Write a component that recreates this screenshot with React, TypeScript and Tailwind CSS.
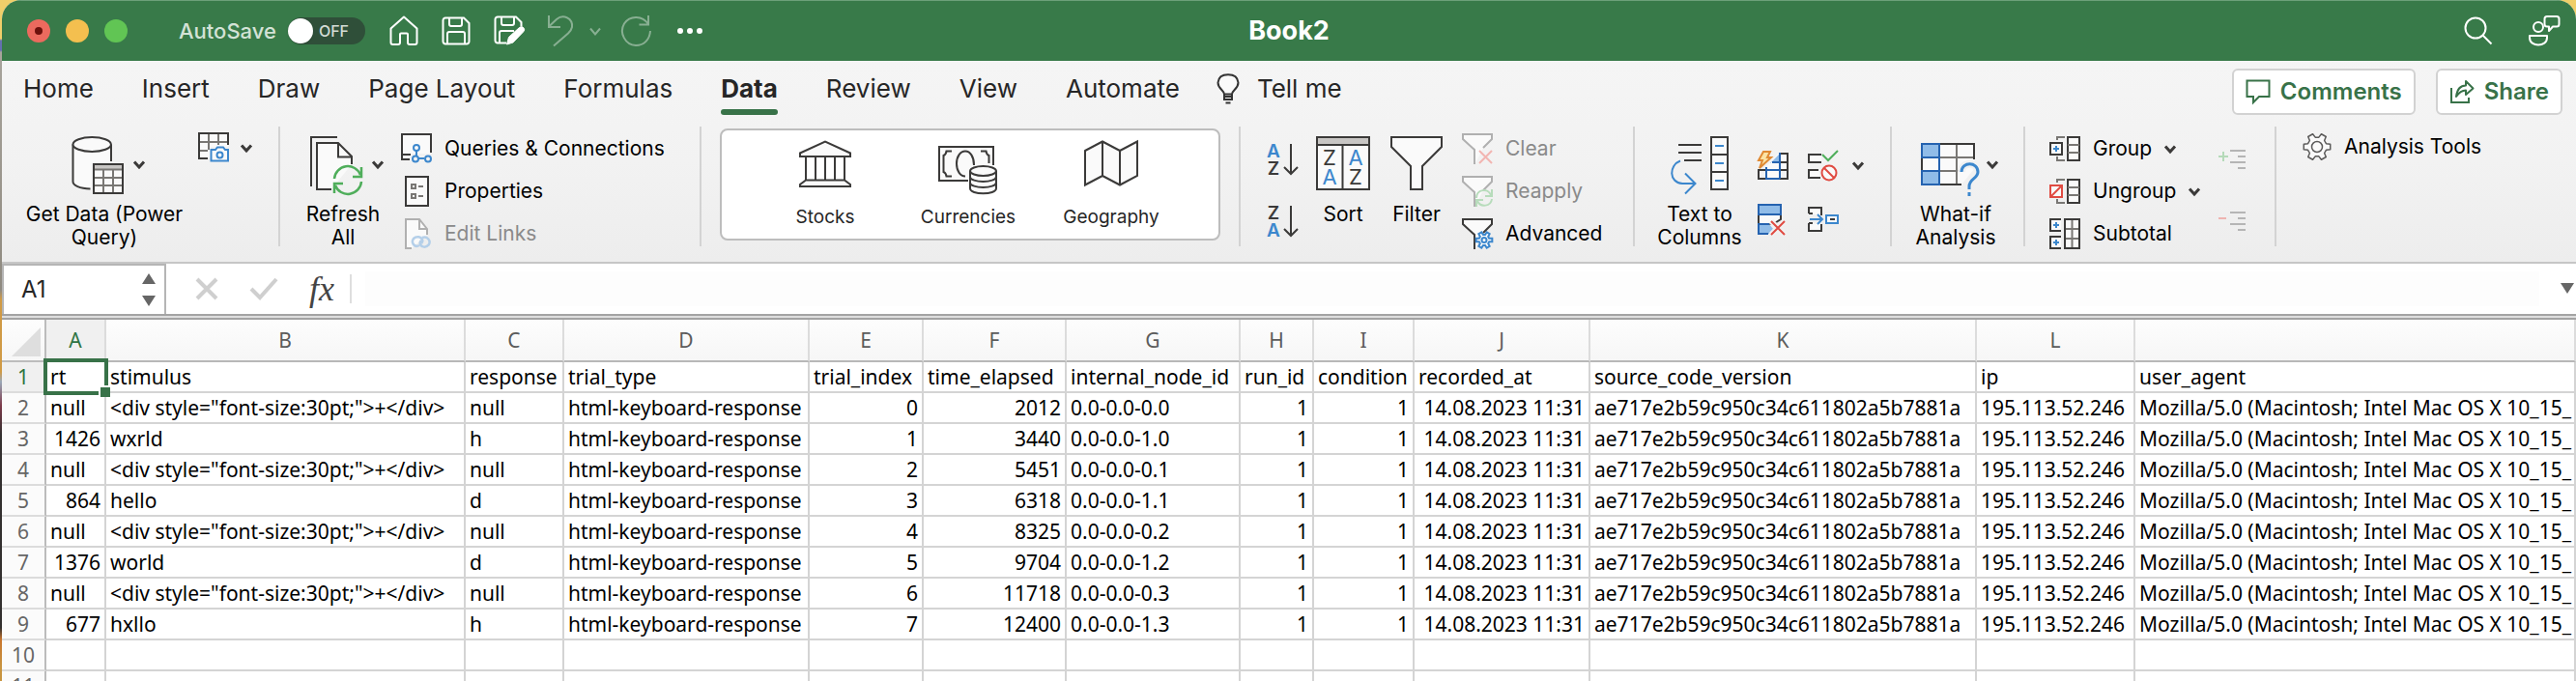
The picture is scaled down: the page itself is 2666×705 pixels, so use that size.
import React from 'react';

const INK = '#3b3a39';
const BLUE = '#3c87cd';
const DEEP = '#2563b0';
const SKY = '#90bce8';
const RED = '#e04b42';
const GREEN = '#4fae5b';
const PAPER = '#fafafa';

type IconProps = { w: number; h: number; children: React.ReactNode; stroke?: string; sw?: number; className?: string };

function Svg({ w, h, children, stroke = INK, sw = 2, className = '' }: IconProps) {
  return (
    <svg
      aria-hidden="true"
      width={w}
      height={h}
      viewBox={`0 0 ${w} ${h}`}
      fill="none"
      stroke={stroke}
      strokeWidth={sw}
      className={`shrink-0 overflow-visible ${className}`}
    >
      {children}
    </svg>
  );
}

function gearPath(cx: number, cy: number, outer: number, inner: number) {
  const pts: string[] = [];
  for (let i = 0; i < 6; i++) {
    const base = (i * Math.PI) / 3;
    const steps: [number, number][] = [
      [-0.34, inner],
      [-0.2, outer],
      [0.2, outer],
      [0.34, inner],
    ];
    for (const [da, r] of steps) {
      pts.push(`${(cx + Math.cos(base + da) * r).toFixed(2)} ${(cy + Math.sin(base + da) * r).toFixed(2)}`);
    }
  }
  return `M${pts.join('L')}Z`;
}

const Chevron = () => (
  <Svg w={12} h={9} sw={3}>
    <path d="M1 1.5 6 7l5-5.5" />
  </Svg>
);

/* ---------- title bar icons ---------- */

const HomeIcon = () => (
  <Svg w={30} h={32} stroke="#fff">
    <path d="M1.5 13.5 15 1.5l13.500 12V28a2 2 0 0 1-2 2H21a2 2 0 0 1-2-2v-8.500a1 1 0 0 0-1-1h-6a1 1 0 0 0-1 1V28a2 2 0 0 1-2 2H3.500a2 2 0 0 1-2-2Z" strokeLinejoin="round" />
  </Svg>
);
const SaveIcon = () => (
  <Svg w={30} h={30} stroke="#fff">
    <path d="M4 1.500h19l5.500 5.500V26a2.500 2.500 0 0 1-2.500 2.500H4A2.500 2.500 0 0 1 1.500 26V4A2.500 2.500 0 0 1 4 1.500Z" />
    <path d="M8 1.500V8a2 2 0 0 0 2 2h9a2 2 0 0 0 2-2V1.500M6 28.500V18a2 2 0 0 1 2-2h14a2 2 0 0 1 2 2v10.500" />
  </Svg>
);
const SaveEditIcon = () => (
  <Svg w={34} h={32} stroke="#fff">
    <path d="M13 28.500H4A2.500 2.500 0 0 1 1.500 26V4A2.500 2.500 0 0 1 4 1.500h19l5.500 5.500v4" />
    <path d="M8 1.500V8a2 2 0 0 0 2 2h9a2 2 0 0 0 2-2V1.500M6 28.500V18a2 2 0 0 1 2-2h13" />
    <path d="m13.500 30 2-7.500L26.500 12.500a3 3 0 0 1 4.300.2 3 3 0 0 1-.2 4.200L20 28Z" fill="#fff" strokeWidth="1" />
  </Svg>
);
const UndoIcon = () => (
  <Svg w={30} h={34} stroke="#fff">
    <path d="M2 1v12h12M2 12.500 10 5C17-1 27 4 26 13c-.5 3-2 4.500-4 6.500L7 32.500" />
  </Svg>
);
const RedoIcon = () => (
  <Svg w={32} h={34} stroke="#fff">
    <path d="M29 1v9.500H19.500M29 10C23 1 10 .5 4 9.500-1.500 19 5 31.500 16 32c8.500 0 14.500-6 15-15" />
  </Svg>
);

/* ---------- ribbon icons ---------- */

const DatabaseIcon = () => (
  <Svg w={56} h={60}>
    <path d="M1.500 8.500V47c0 4 8 7.500 19 7.500V28H41V8.500Z" fill={PAPER} stroke="none" />
    <path d="M1.500 8.500V47c0 4 7 7 18 7.500M41 8.500V26" />
    <ellipse cx="21.200" cy="8.500" rx="19.700" ry="7.500" fill={PAPER} />
    <rect x="23" y="29" width="30" height="30" fill={PAPER} />
    <path d="M23 29h30v5.500H23Z" fill="#c8c6c4" stroke="none" />
    <path d="M33 35v24M43 35v24M23 43h30M23 51h30" stroke="#797774" />
    <path d="M23 34.500h30" stroke="#797774" />
    <rect x="23" y="29" width="30" height="30" />
  </Svg>
);
const TableCameraIcon = () => (
  <Svg w={32} h={32}>
    <path d="M1 1h30v14H13v12H1Z" fill={PAPER} stroke="none" />
    <path d="M11 1v17M21 1v12M1 10h30M1 19h9" stroke="#797774" />
    <path d="M10 27H1V1h30v12" />
    <path d="M14 18h4l2-2.500h6L28 18h3v11.500H13.500V18Z" stroke={BLUE} fill={PAPER} />
    <circle cx="22.500" cy="23.500" r="3" stroke={BLUE} />
  </Svg>
);
const RefreshIcon = () => (
  <Svg w={56} h={61}>
    <path d="M1 52V1h27" />
    <path d="M22 55H7V7h22l14 14v8" fill={PAPER} />
    <path d="M29 7v14.500h14" />
    <g stroke={GREEN} strokeWidth="2.500">
      <path d="M25 44a14 14 0 0 1 27-4M53 32v10H44" />
      <path d="M53 47a14 14 0 0 1-27 4M25 59V49h9" />
    </g>
  </Svg>
);
const QueriesIcon = () => (
  <Svg w={32} h={32}>
    <path d="M1 1h30v20H1Z" fill={PAPER} stroke="none" />
    <path d="M10 22H1V1h30v19M1 22v5h8" />
    <g stroke={BLUE}>
      <path d="M16 18v5M18 26h6" />
      <circle cx="16" cy="15" r="3" />
      <circle cx="15" cy="26.500" r="3" />
      <circle cx="28" cy="26.500" r="3" />
    </g>
  </Svg>
);
const PropertiesIcon = () => (
  <Svg w={32} h={32}>
    <rect x="5" y="1" width="23" height="30" fill={PAPER} />
    <path d="M11 9h4v4h-4ZM11 19h4v4h-4ZM18 11h5M18 21h5" stroke="#797774" />
  </Svg>
);
const EditLinksIcon = () => (
  <Svg w={32} h={32} stroke="#b0b0b0">
    <path d="M11 31H5V1h14l8 10v6" fill={PAPER} />
    <path d="M19 1v10h8" />
    <g stroke="#b4cfe9" strokeWidth="2.500">
      <path d="M19 28c-5 3-9-3-6-7 3-3 8-2 9 1 1 2 0 3-1 4" />
      <path d="M22 20c5-2 9 3 7 7-3 4-8 3-9 0-1-2 0-3 1-4" />
    </g>
  </Svg>
);
const StocksIcon = () => (
  <Svg w={54} h={50}>
    <path d="M1 13.500 27 1.500l26 12V17H1ZM7 17v24M17 17v24M27 17v24M37 17v24M47 17v24" fill={PAPER} />
    <path d="M7 41.500h40l6 4.500v2H1v-2Z" fill={PAPER} />
  </Svg>
);
const CurrenciesIcon = () => (
  <Svg w={62} h={52}>
    <path d="M31 36H1V1h56v19" fill={PAPER} />
    <path d="M14 5.500H8.500Q8 9 5.500 10v17q2.500 1 3 4.500H14M44 5.500h5.500Q50 9 52.500 10v8" />
    <path d="M37 20c0-9-4-14.500-9-14.500S19 11 19 18.500 23 31.500 28 31.500" />
    <path d="M33 26v18c0 7 27 7 27 0V26" fill={PAPER} />
    <ellipse cx="46.500" cy="26" rx="13.500" ry="5" fill={PAPER} />
    <path d="M33 32c0 6.500 27 6.500 27 0M33 38c0 6.500 27 6.500 27 0" />
  </Svg>
);
const GeographyIcon = () => (
  <Svg w={56} h={50}>
    <path d="M1 11 19 1.500 37 11 55 1.500V37L37 46.500 19 37 1 46.500ZM19 1.500V37M37 11v35.500" fill={PAPER} />
  </Svg>
);

function SortArrowIcon({ first, second }: { first: 'A' | 'Z'; second: 'A' | 'Z' }) {
  return (
    <Svg w={34} h={34}>
      <g fontFamily="Inter, sans-serif" fontSize="19" fontWeight="600" textAnchor="middle" stroke="none">
        <text x="8" y="14" fill={first === 'A' ? BLUE : INK}>{first}</text>
        <text x="8" y="32" fill={second === 'A' ? BLUE : INK}>{second}</text>
      </g>
      <path d="M26 0v30M19 24l7 7 7-7" />
    </Svg>
  );
}
const SortIcon = () => (
  <Svg w={56} h={58}>
    <rect x="1" y="1" width="54" height="54" fill={PAPER} />
    <path d="M2 2h52v7H2Z" fill="#c8c6c4" stroke="none" />
    <path d="M1 9h54M27.500 9v46" />
    <g fontFamily="Inter, sans-serif" fontSize="22" textAnchor="middle" stroke="none">
      <text x="14" y="30" fill={INK}>Z</text>
      <text x="41" y="30" fill={BLUE}>A</text>
      <text x="14" y="50" fill={BLUE}>A</text>
      <text x="41" y="50" fill={INK}>Z</text>
    </g>
  </Svg>
);
const FilterIcon = () => (
  <Svg w={54} h={58}>
    <path d="M1 1h52v10L33 31v24H21V31L1 11Z" fill={PAPER} />
  </Svg>
);

function SmallFunnel({ faded, children }: { faded?: boolean; children: React.ReactNode }) {
  return (
    <Svg w={32} h={32} stroke={faded ? '#b0b0b0' : INK}>
      <path d="M1 1h30v5l-9 9-8 16V17L1 6Z" fill={PAPER} stroke="none" />
      <path d="M13 32V17L1 6V1h30v5l-9 9" />
      {children}
    </Svg>
  );
}
const ClearIcon = () => (
  <SmallFunnel faded>
    <path d="m18 18 13 13M31 18 18 31" stroke="#f2b5b1" />
  </SmallFunnel>
);
const ReapplyIcon = () => (
  <SmallFunnel faded>
    <g stroke="#b7dcbb">
      <path d="M15 23c0-9 12-11 15-3M31 14v7h-7" />
      <path d="M31 24c-1 8-12 9-15 2M15 32v-7h7" />
    </g>
  </SmallFunnel>
);
const AdvancedIcon = () => (
  <SmallFunnel>
    <path d={gearPath(23, 22.5, 8.5, 5.5)} stroke={BLUE} fill={PAPER} />
    <circle cx="23" cy="22.500" r="2.500" stroke={BLUE} />
  </SmallFunnel>
);

const TextColumnsIcon = () => (
  <Svg w={60} h={61}>
    <path d="M8 9h24M8 17h24M14 25h18" />
    <rect x="42" y="1" width="17" height="54" fill={PAPER} />
    <path d="M42 19h17M42 37h17" />
    <path d="M46 10h9M46 28h9M46 46h9" stroke={BLUE} />
    <path d="M10 25.500C-2 30-2 48 12 49h13M15 38.500 25.500 49 15 59.500" stroke={BLUE} />
  </Svg>
);
const FlashFillIcon = () => (
  <Svg w={34} h={32}>
    <path d="M2 22h31V4H22L10 18v4H2Z" fill={PAPER} stroke="none" />
    <path d="M24 4h8v26H2v-9h8M24 13h8M24 21h8" />
    <path d="M11 22h13v8H11Z" fill={PAPER} stroke="none" />
    <path d="M14 14 24 4v9H14Z" fill={SKY} stroke="none" />
    <path d="M24 3v27M10 18v12H24M10 21h14M16 13h8" stroke={DEEP} />
    <path d="M7 2h7l-3 6h4L3 19l3-8H2Z" fill="#fbe3a5" stroke="#e08a33" />
  </Svg>
);
const ValidationIcon = () => (
  <Svg w={34} h={34}>
    <path d="M15 6H2v8h13M12 22H2v8h12" fill={PAPER} />
    <path d="m16 6 6 6L32 2" stroke={GREEN} />
    <circle cx="23" cy="25" r="7.500" stroke={RED} fill={PAPER} />
    <path d="m18 20 10 10" stroke={RED} />
  </Svg>
);
const RemoveDuplicatesIcon = () => (
  <Svg w={32} h={34}>
    <path d="M2 12h23v5l-8 5H2Z" fill={PAPER} />
    <path d="M2 2h23v10H2Z" fill={SKY} stroke={DEEP} />
    <path d="M13 32H2V22h11l4 5Z" fill={SKY} stroke="none" />
    <path d="M12 32H2V22h11" stroke={DEEP} />
    <path d="m15 19 14 14M29 19 15 33" stroke="#f1f1f1" strokeWidth="6" />
    <path d="m15 19 14 14M29 19 15 33" stroke={RED} />
  </Svg>
);
const ConsolidateIcon = () => (
  <Svg w={34} h={28}>
    <path d="M2 8V2h13v8M2 18v8h13v-7M2 8h4M2 18h4" fill={PAPER} />
    <path d="M3 14h13M11 9l5 5-5 5" stroke={BLUE} />
    <rect x="20" y="10" width="12" height="8" stroke={BLUE} fill={PAPER} />
    <path d="M24 14h5" />
  </Svg>
);
const WhatIfIcon = () => (
  <Svg w={60} h={56}>
    <path d="M1 2h54v26L42 44H1Z" fill={PAPER} stroke="none" />
    <path d="M37 2v42M19 16h36M19 30h20" stroke="#797774" />
    <path d="M19 2h36v16M1 16v14M19 44h23" />
    <path d="M1 2h18v14H1ZM1 30h18v14H1Z" fill={SKY} stroke={DEEP} />
    <path d="M19 16v14" stroke={DEEP} />
    <path d="M42 31c0-11 17-11 17 0 0 7-9 7-9 15v3" stroke="#f1f1f1" strokeWidth="8" />
    <path d="M42 31c0-11 17-11 17 0 0 7-9 7-9 15v3M50 52v4" stroke={BLUE} strokeWidth="3" />
  </Svg>
);
const GroupIcon = () => (
  <Svg w={32} h={28}>
    <path d="M8 5V2h8M8 22v4h8" stroke="#797774" />
    <rect x="1" y="8" width="12" height="12" fill={PAPER} />
    <path d="M7 11v6M4 14h6" stroke={BLUE} />
    <rect x="19" y="2" width="12" height="24" fill={PAPER} />
    <path d="M19 10h12M19 18h12" stroke="#797774" />
  </Svg>
);
const UngroupIcon = () => (
  <Svg w={32} h={28}>
    <path d="M8 5V2h8M8 22v4h8" stroke="#797774" />
    <rect x="1" y="8" width="12" height="12" fill={PAPER} stroke={RED} />
    <path d="M2 19 12 9" stroke={RED} />
    <rect x="19" y="2" width="12" height="24" fill={PAPER} />
    <path d="M19 10h12M19 18h12" stroke="#797774" />
  </Svg>
);
const SubtotalIcon = () => (
  <Svg w={32} h={32}>
    <path d="M12 1H1v12h11M12 19H1v12h11" fill={PAPER} />
    <path d="M7 4v6M4 7h6M7 22v6M4 25h6" stroke={BLUE} />
    <rect x="16" y="1" width="15" height="30" fill={PAPER} />
    <path d="M23.500 1v30M16 11h15M16 21h15" stroke="#797774" />
    <rect x="16" y="1" width="15" height="30" />
  </Svg>
);
const ShowDetailIcon = () => (
  <Svg w={30} h={24} stroke="#b5b5b5">
    <path d="M12 2h16M20 8h8M12 14h16M20 20h8" />
    <path d="M0 8h10M5 3v10" stroke="#b5dab9" />
  </Svg>
);
const HideDetailIcon = () => (
  <Svg w={30} h={24} stroke="#b5b5b5">
    <path d="M12 2h16M20 8h8M12 14h16M20 20h8" />
    <path d="M0 8h8" stroke="#eeb4b1" />
  </Svg>
);
const AnalysisIcon = () => (
  <Svg w={30} h={30} stroke="#5c5b5a">
    <g strokeWidth="1.500">
      <path d={gearPath(15, 15, 14, 10)} fill={PAPER} strokeLinejoin="round" />
      <circle cx="15" cy="15" r="5.500" />
    </g>
  </Svg>
);

/* ---------- ribbon building blocks ---------- */

const Divider = () => <div className="mt-1 h-[124px] w-[2px] shrink-0 bg-[#d3d3d3]" />;

function LargeButton({
  icon,
  lines,
  menu,
  className,
}: {
  icon: React.ReactNode;
  lines: string[];
  menu?: boolean;
  className: string;
}) {
  return (
    <button type="button" className={`mt-[14px] flex shrink-0 flex-col items-center self-start ${className}`}>
      <span className={`flex h-[60px] gap-2 ${menu ? 'pl-2' : ''}`}>
        {icon}
        {menu && (
          <span className="mt-[25px]">
            <Chevron />
          </span>
        )}
      </span>
      <span className="mt-[9px] flex flex-col text-center leading-6 whitespace-nowrap">
        {lines.map((line) => (
          <span key={line}>{line}</span>
        ))}
      </span>
    </button>
  );
}

function RowButton({
  icon,
  label,
  menu,
  disabled,
}: {
  icon: React.ReactNode;
  label: string;
  menu?: boolean;
  disabled?: boolean;
}) {
  return (
    <button
      type="button"
      disabled={disabled}
      className="flex h-8 items-center gap-[13px] whitespace-nowrap disabled:text-[#8a8a8a]"
    >
      {icon}
      <span>{label}</span>
      {menu && <Chevron />}
    </button>
  );
}

const TABS = ['Home', 'Insert', 'Draw', 'Page Layout', 'Formulas', 'Data', 'Review', 'View', 'Automate'];

const COLUMNS = [
  { letter: 'A', width: 62 },
  { letter: 'B', width: 372 },
  { letter: 'C', width: 102 },
  { letter: 'D', width: 254 },
  { letter: 'E', width: 118 },
  { letter: 'F', width: 148 },
  { letter: 'G', width: 180 },
  { letter: 'H', width: 76 },
  { letter: 'I', width: 104 },
  { letter: 'J', width: 182 },
  { letter: 'K', width: 400 },
  { letter: 'L', width: 164 },
  { letter: '', width: 0 },
];

const HEADER = [
  'rt',
  'stimulus',
  'response',
  'trial_type',
  'trial_index',
  'time_elapsed',
  'internal_node_id',
  'run_id',
  'condition',
  'recorded_at',
  'source_code_version',
  'ip',
  'user_agent',
];

const FIXATION = '<div style="font-size:30pt;">+</div>';

const TRIALS: [string, string, string, string, string][] = [
  ['null', FIXATION, 'null', '2012', '0.0-0.0-0.0'],
  ['1426', 'wxrld', 'h', '3440', '0.0-0.0-1.0'],
  ['null', FIXATION, 'null', '5451', '0.0-0.0-0.1'],
  ['864', 'hello', 'd', '6318', '0.0-0.0-1.1'],
  ['null', FIXATION, 'null', '8325', '0.0-0.0-0.2'],
  ['1376', 'world', 'd', '9704', '0.0-0.0-1.2'],
  ['null', FIXATION, 'null', '11718', '0.0-0.0-0.3'],
  ['677', 'hxllo', 'h', '12400', '0.0-0.0-1.3'],
];

const ROWS: string[][] = [
  HEADER,
  ...TRIALS.map(([rt, stimulus, response, elapsed, node], i) => [
    rt,
    stimulus,
    response,
    'html-keyboard-response',
    String(i),
    elapsed,
    node,
    '1',
    '1',
    '14.08.2023 11:31',
    'ae717e2b59c950c34c611802a5b7881a',
    '195.113.52.246',
    'Mozilla/5.0 (Macintosh; Intel Mac OS X 10_15_',
  ]),
  Array(13).fill(''),
  Array(13).fill(''),
];

const isNumeric = (v: string) => /^\d+$/.test(v) || /^\d\d\.\d\d\.\d{4} /.test(v);

function TitleBar() {
  return (
    <header className="grid h-[63px] shrink-0 grid-cols-[1fr_auto_1fr] items-center border-t border-[#6ca079] bg-[#387a49] text-white">
      <div className="flex items-center pl-[26px]">
        <div className="flex gap-4">
          <button type="button" aria-label="Close" className="grid size-6 place-items-center rounded-full bg-[#ec6a5e]">
            <span className="size-2 rounded-full bg-[#6d110c]" />
          </button>
          <button type="button" aria-label="Minimize" className="size-6 rounded-full bg-[#f4bf4f]" />
          <button type="button" aria-label="Zoom" className="size-6 rounded-full bg-[#61c554]" />
        </div>
        <label className="ml-[53px] flex cursor-pointer items-center gap-3 text-[22px] leading-7 font-medium text-[#d3e2d6]">
          AutoSave
          <input type="checkbox" className="peer sr-only" />
          <span className="flex h-7 w-20 items-center gap-[6px] rounded-full bg-[#2f4f39]">
            <span className="size-[26px] rounded-full bg-white shadow" />
            <span className="text-base leading-7 font-medium text-[#d3dcd5]">OFF</span>
          </span>
        </label>
        <div className="ml-[25px] flex items-center">
          <button type="button" aria-label="Home" className="w-[54px]"><HomeIcon /></button>
          <button type="button" aria-label="Save" className="w-[54px]"><SaveIcon /></button>
          <button type="button" aria-label="Save as" className="w-[55px]"><SaveEditIcon /></button>
          <button type="button" aria-label="Undo" disabled className="w-[44px] opacity-40"><UndoIcon /></button>
          <button type="button" aria-label="Undo history" disabled className="w-8 opacity-40">
            <Svg w={12} h={9} stroke="#fff"><path d="M1 1.500 6 7.500l5-6" /></Svg>
          </button>
          <button type="button" aria-label="Redo" disabled className="w-[58px] opacity-40"><RedoIcon /></button>
          <button type="button" aria-label="More commands">
            <Svg w={28} h={8} stroke="none">
              <g fill="#fff"><circle cx="4" cy="4" r="3" /><circle cx="14" cy="4" r="3" /><circle cx="24" cy="4" r="3" /></g>
            </Svg>
          </button>
        </div>
      </div>
      <h1 className="text-[27px] leading-8 font-bold">Book2</h1>
      <div className="flex items-center justify-end gap-[36px] pr-4">
        <button type="button" aria-label="Search">
          <Svg w={30} h={30} stroke="#fff">
            <circle cx="12" cy="12" r="10.500" />
            <path d="m19.500 19.500 9 9" />
          </Svg>
        </button>
        <button type="button" aria-label="Share feedback">
          <Svg w={34} h={34} stroke="#fff">
            <circle cx="11" cy="13" r="5" />
            <path d="M2 22h18v2c0 10-18 10-18 0Z" strokeLinejoin="round" />
            <path d="M20 2h10a2.500 2.500 0 0 1 2.500 2.500V10a2.500 2.500 0 0 1-2.500 2.500h-4L22 17v-4.500h-2A2.500 2.500 0 0 1 17.500 10V4.500A2.500 2.500 0 0 1 20 2Z" strokeLinejoin="round" />
          </Svg>
        </button>
      </div>
    </header>
  );
}

function TabBar() {
  return (
    <nav className="flex h-16 items-start justify-between pr-[14px] pl-[22px] text-[26px] leading-8 text-[#262626]">
      <div className="flex gap-[50px] pt-[13px]">
        {TABS.map((tab) => {
          const active = tab === 'Data';
          return (
            <button key={tab} type="button" className={`flex flex-col whitespace-nowrap ${active ? 'font-bold' : ''}`}>
              {tab}
              {active && <span className="mt-[5px] h-[6px] w-full rounded-full bg-[#387248]" />}
            </button>
          );
        })}
        <button type="button" className="-ml-3 flex h-8 items-center gap-[18px] whitespace-nowrap">
          <Svg w={24} h={32} stroke="#333">
            <path d="M8 21.500c0-4-6.500-5.500-6.500-12C2 4 6 1.200 12 1.200S22 4 22.500 9.500c0 6.500-6.500 8-6.500 12Z" fill={PAPER} />
            <path d="M8 21v6h8v-6M8 24h8M9.500 30.500h5" />
          </Svg>
          Tell me
        </button>
      </div>
      <div className="flex gap-[21px] pt-2 text-[24px] font-semibold text-[#387248]">
        <button type="button" className="flex h-12 items-center gap-[10px] rounded-md border-2 border-[#d2d2d2] bg-white px-3 whitespace-nowrap">
          <Svg w={26} h={26} stroke="#387248">
            <path d="M1.500 1.500h23V18H14l-6 6v-6H1.500Z" />
          </Svg>
          Comments
        </button>
        <button type="button" className="flex h-12 items-center gap-[10px] rounded-md border-2 border-[#d2d2d2] bg-white px-3 whitespace-nowrap">
          <Svg w={26} h={26} stroke="#387248">
            <path d="M2 9v15h18v-5" />
            <path d="M7 18c1-8 5-11.500 10-11.500V2l7.500 7.500L17 16v-4.500c-4 0-7 2-10 6.500Z" strokeLinejoin="round" />
          </Svg>
          Share
        </button>
      </div>
    </nav>
  );
}

function Ribbon() {
  return (
    <div className="flex h-36 overflow-hidden text-[21px] leading-6 text-black">
      <section aria-label="Get data" className="flex w-[286px] shrink-0 items-start pl-4">
        <LargeButton icon={<DatabaseIcon />} lines={['Get Data (Power', 'Query)']} menu className="w-[180px]" />
        <button type="button" aria-label="Data from picture" className="mt-[10px] ml-[7px] flex items-center gap-3">
          <TableCameraIcon />
          <Chevron />
        </button>
      </section>
      <Divider />
      <section aria-label="Connections" className="flex w-[434px] shrink-0 items-start pl-[20px]">
        <LargeButton icon={<RefreshIcon />} lines={['Refresh', 'All']} menu className="w-[90px]" />
        <div className="mt-[11px] ml-[15px] flex flex-col gap-3">
          <RowButton icon={<QueriesIcon />} label="Queries & Connections" />
          <RowButton icon={<PropertiesIcon />} label="Properties" />
          <RowButton icon={<EditLinksIcon />} label="Edit Links" disabled />
        </div>
      </section>
      <Divider />
      <section aria-label="Data types" className="w-[556px] shrink-0 px-[19px] pt-[6px]">
        <div className="flex h-[116px] items-start rounded-lg border-2 border-[#bdbdbd] bg-white pl-[33px] text-[19px] text-[#262626]">
          {[
            { label: 'Stocks', icon: <StocksIcon />, pad: 'pt-[10px]' },
            { label: 'Currencies', icon: <CurrenciesIcon />, pad: 'pt-4' },
            { label: 'Geography', icon: <GeographyIcon />, pad: 'pt-[10px]' },
          ].map(({ label, icon, pad }) => (
            <button key={label} type="button" className="flex w-[148px] flex-col items-center">
              <span className={`h-[78px] ${pad}`}>{icon}</span>
              {label}
            </button>
          ))}
        </div>
      </section>
      <Divider />
      <section aria-label="Sort and filter" className="flex w-[406px] shrink-0 items-start pl-[26px]">
        <div className="mt-[22px] flex flex-col gap-[30px]">
          <button type="button" aria-label="Sort ascending"><SortArrowIcon first="A" second="Z" /></button>
          <button type="button" aria-label="Sort descending"><SortArrowIcon first="Z" second="A" /></button>
        </div>
        <LargeButton icon={<SortIcon />} lines={['Sort']} className="ml-4 w-[60px]" />
        <LargeButton icon={<FilterIcon />} lines={['Filter']} className="ml-4 w-[60px]" />
        <div className="mt-[11px] ml-[17px] flex flex-col gap-3">
          <RowButton icon={<ClearIcon />} label="Clear" disabled />
          <RowButton icon={<ReapplyIcon />} label="Reapply" disabled />
          <RowButton icon={<AdvancedIcon />} label="Advanced" />
        </div>
      </section>
      <Divider />
      <section aria-label="Data tools" className="flex w-[264px] shrink-0 items-start pl-[22px]">
        <LargeButton icon={<TextColumnsIcon />} lines={['Text to', 'Columns']} className="w-[90px]" />
        <div className="mt-[27px] ml-[14px] grid grid-cols-[52px_auto] gap-y-[22px]">
          <button type="button" aria-label="Flash fill"><FlashFillIcon /></button>
          <button type="button" aria-label="Data validation" className="flex items-center gap-[13px]">
            <ValidationIcon />
            <Chevron />
          </button>
          <button type="button" aria-label="Remove duplicates"><RemoveDuplicatesIcon /></button>
          <button type="button" aria-label="Consolidate"><ConsolidateIcon /></button>
        </div>
      </section>
      <Divider />
      <section aria-label="Forecast" className="flex w-[136px] shrink-0 items-start pl-[21px]">
        <LargeButton icon={<span className="pt-[6px]"><WhatIfIcon /></span>} lines={['What-if', 'Analysis']} menu className="w-[90px]" />
      </section>
      <Divider />
      <section aria-label="Outline" className="flex w-[258px] shrink-0 items-start pl-[25px]">
        <div className="mt-[11px] flex w-[175px] flex-col gap-3">
          <RowButton icon={<GroupIcon />} label="Group" menu />
          <RowButton icon={<UngroupIcon />} label="Ungroup" menu />
          <RowButton icon={<SubtotalIcon />} label="Subtotal" />
        </div>
        <div className="mt-[27px] flex flex-col gap-10">
          <button type="button" disabled aria-label="Show detail"><ShowDetailIcon /></button>
          <button type="button" disabled aria-label="Hide detail"><HideDetailIcon /></button>
        </div>
      </section>
      <Divider />
      <section aria-label="Analysis" className="flex items-start pt-[9px] pl-[27px]">
        <RowButton icon={<AnalysisIcon />} label="Analysis Tools" />
      </section>
    </div>
  );
}

function FormulaBar() {
  return (
    <div className="flex h-[52px] shrink-0 items-stretch bg-white">
      <div className="flex w-[170px] shrink-0 items-center border-t-2 border-r-2 border-l-2 border-[#b5b5b5] pr-2 pl-[18px]">
        <input
          aria-label="Name box"
          defaultValue="A1"
          className="w-full min-w-0 bg-transparent text-[24px] leading-8 text-[#262626] outline-none"
        />
        <Svg w={16} h={36} stroke="none">
          <path d="M8 1 15 12H1ZM8 35 1 24h14Z" fill="#666" />
        </Svg>
      </div>
      <div className="flex flex-1 items-center pl-[30px]">
        <button type="button" aria-label="Cancel">
          <Svg w={24} h={24} stroke="#cfcfcf" sw={4}><path d="m2 2 20 20M22 2 2 22" /></Svg>
        </button>
        <button type="button" aria-label="Enter" className="ml-8">
          <Svg w={30} h={24} stroke="#cfcfcf" sw={4}><path d="m2 12 9 9L28 2" /></Svg>
        </button>
        <button
          type="button"
          aria-label="Insert function"
          className="ml-8 font-['Liberation_Serif',serif] text-[36px] leading-[44px] text-[#444] italic"
        >
          fx
        </button>
        <div className="ml-4 h-[30px] w-[2px] bg-[#dedede]" />
        <input aria-label="Formula" className="ml-[14px] h-9 min-w-0 flex-1 bg-[#fdfdfd] outline-none" />
        <button type="button" aria-label="Expand formula bar" className="mr-[2px] ml-[22px]">
          <Svg w={14} h={12} stroke="none"><path d="M0 0h14L7 11Z" fill="#666" /></Svg>
        </button>
      </div>
    </div>
  );
}

function Sheet() {
  return (
    <table className="w-full table-fixed border-separate border-spacing-0 bg-white font-['Noto_Sans',sans-serif] text-[21px] leading-[30px] text-black">
      <colgroup>
        <col className="w-[46px]" />
        {COLUMNS.map((c, i) => (
          <col key={i} style={c.width ? { width: c.width } : undefined} />
        ))}
      </colgroup>
      <thead>
        <tr className="h-11 bg-linear-to-b from-[#fdfdfd] to-[#f6f6f6] text-[#5c5c5c]">
          <th className="border-r-2 border-b-2 border-[#bcbcbc] p-0">
            <svg aria-hidden="true" width="30" height="30" viewBox="0 0 30 30" className="mt-1 ml-[10px]">
              <path d="M30 0v30H0Z" fill="#dedede" />
            </svg>
          </th>
          {COLUMNS.map((c, i) => (
            <th
              key={i}
              scope="col"
              className={`border-r-2 border-b-2 border-r-[#dcdcdc] border-b-[#b8b8b8] p-0 font-normal ${
                i === 0 ? 'bg-[#f0f0f0] text-[#2e7443]' : ''
              }`}
            >
              {c.letter}
            </th>
          ))}
        </tr>
      </thead>
      <tbody>
        {ROWS.map((row, r) => (
          <tr key={r} className="h-8">
            <th
              scope="row"
              className={`border-r-2 border-b-2 border-r-[#bcbcbc] border-b-[#dcdcdc] p-0 font-normal ${
                r === 0 ? 'bg-[#f0f0f0] text-[#2e7443]' : 'bg-[#fbfbfb] text-[#666]'
              }`}
            >
              {r + 1}
            </th>
            {row.map((value, c) => (
              <td
                key={c}
                className={`relative border-r-2 border-b-2 border-[#d4d4d4] px-1 py-0 whitespace-nowrap ${
                  isNumeric(value) ? 'text-right' : 'text-left'
                } ${c === 12 ? 'overflow-hidden' : ''}`}
              >
                {value}
                {r === 0 && c === 0 && (
                  <>
                    <span className="absolute -top-1 -right-1 -bottom-1 -left-[3px] z-10 border-4 border-[#387248]" />
                    <span className="absolute -right-[6px] -bottom-[6px] z-20 size-3 border-t-2 border-l-2 border-white bg-[#387248]" />
                  </>
                )}
              </td>
            ))}
          </tr>
        ))}
      </tbody>
    </table>
  );
}

export default function App() {
  return (
    <div className="h-screen overflow-hidden bg-[linear-gradient(to_bottom,#f0cf6a_0px,#f0cf6a_40px,#6470b0_42px,#6470b0_52px,#a8a49c_54px,#8f8a80_300px,#d09a45_310px,#d09a45_385px,#9aa8b8_395px,#7d3a4a_420px,#33302f_450px,#33302f_650px,#c8752d_662px,#c89440_690px)] pl-[2px] font-['Inter',sans-serif]">
      <div className="flex h-full flex-col overflow-hidden rounded-t-[20px] bg-white">
        <TitleBar />
        <div className="shrink-0 border-b-2 border-[#c6c6c6] bg-linear-to-b from-[#f5f5f5] via-[#f2f2f2] to-[#ededed]">
          <TabBar />
          <Ribbon />
        </div>
        <FormulaBar />
        <div className="h-[6px] shrink-0 border-t-2 border-b-2 border-[#a3a3a3] bg-[#dedede]" />
        <div className="min-h-0 flex-1 overflow-hidden">
          <Sheet />
        </div>
      </div>
    </div>
  );
}
